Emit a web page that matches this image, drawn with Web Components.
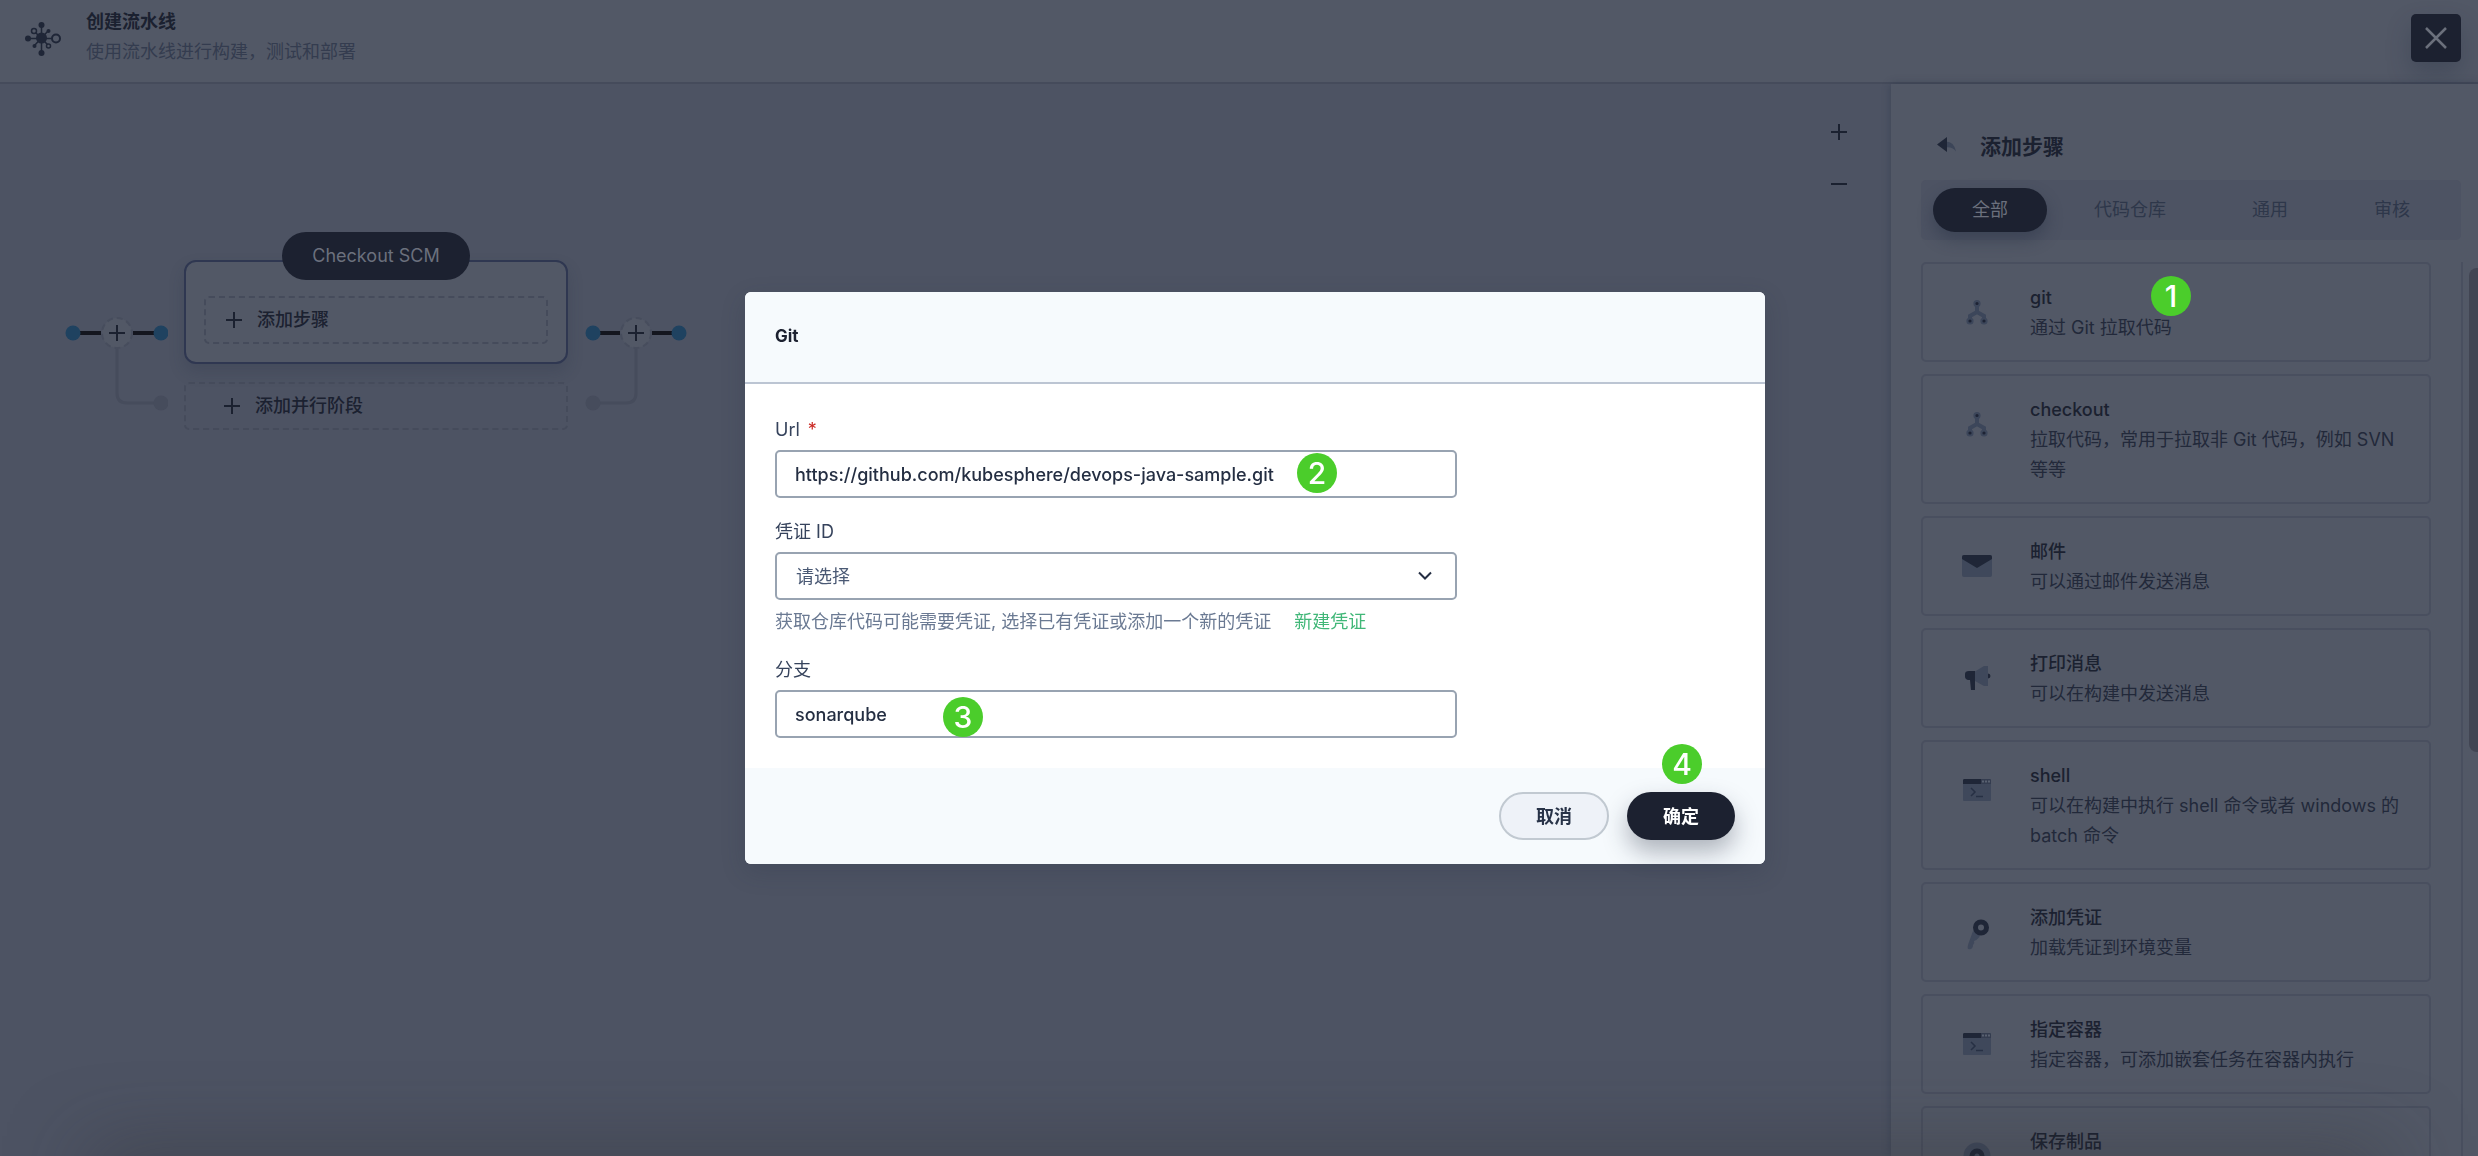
<!DOCTYPE html>
<html lang="zh-CN">
<head>
<meta charset="utf-8">
<title>创建流水线</title>
<style>
  html, body { margin: 0; height: 100%; }
  body {
    font-family: Inter, "Noto Sans CJK SC", sans-serif;
    font-size: 18px;
    line-height: 30px;
    overflow: hidden;
    --surface: #525866;
    --canvas: #4d5363;
    --line: #454b5b;
    --faint: #494f5f;
    --ink: #1b2130;
    --ink-soft: #22293a;
    --muted: #343c4f;
    --navy: #1c2130;
  }
</style>
</head>
<body>
<pipeline-app></pipeline-app>
<script>
const RESET = `
  *, *::before, *::after { box-sizing: border-box; }
  button, input, select { font: inherit; color: inherit; margin: 0; }
  button { border: 0; background: none; padding: 0; cursor: pointer; }
  h1, h2, h3, p, ul { margin: 0; padding: 0; font-size: inherit; }
  svg { display: block; }
`;

function define(name, css, html) {
  customElements.define(name, class extends HTMLElement {
    connectedCallback() {
      if (this.shadowRoot) return;
      const root = this.attachShadow({ mode: 'open' });
      const markup = typeof html === 'function' ? html(this) : html;
      root.innerHTML = `<style>${RESET}${css}</style>${markup}`;
    }
  });
}

const ICONS = {
  branch: `<svg width="40" height="40" viewBox="0 0 40 40"><path d="M20 11v9M13 29v-5l7-4 7 4v5" fill="none" stroke="#3c465a" stroke-width="4"/><g fill="#1d2334" stroke="#3c465a" stroke-width="2"><circle cx="20" cy="11.500" r="2.600"/><circle cx="13" cy="29" r="2.600"/><circle cx="27" cy="29" r="2.600"/></g></svg>`,
  mail: `<svg width="40" height="40" viewBox="0 0 40 40"><rect x="5" y="9" width="30" height="22" rx="2" fill="#3f485b"/><path d="M7 9h26a2 2 0 0 1 2 2v2L20 22 5 13v-2a2 2 0 0 1 2-2z" fill="#1f2637"/></svg>`,
  horn: `<svg width="40" height="40" viewBox="0 0 40 40"><path d="M18 13.500 27 8h4v20h-4l-9-5z" fill="#3f485b"/><path d="M31 15.500a2.500 2.500 0 0 1 0 5zM18 13v19h-4l-1-10h-2q-3-1-3-3.500V16q0-3 4-3z" fill="#1f2637"/></svg>`,
  shell: `<svg width="40" height="40" viewBox="0 0 40 40"><rect x="6" y="9" width="28" height="22" rx="1" fill="#3f485b"/><path d="M7 9h17v5H6v-4z" fill="#1f2637"/><path d="M24 9h9l1 1v4H24z" fill="#343c4f"/><path d="M25 11.500h2m1 0h2m1 0h2" stroke="#596171" stroke-width="2"/><path d="m14 18 4 4-4 4M19 26.500h7" fill="none" stroke="#273044" stroke-width="1.500"/></svg>`,
  key: `<svg width="40" height="40" viewBox="0 0 40 40"><path d="m16 19 7 4q-1 4-6 6 1 2-1 4 0 5-5 4-1-2 1-7z" fill="#3f485b"/><circle cx="24" cy="15.500" r="5.500" fill="none" stroke="#1f2637" stroke-width="5"/></svg>`,
  disc: `<svg width="40" height="40" viewBox="0 0 40 40"><circle cx="20" cy="20" r="13.500" fill="#3f485b"/><circle cx="20" cy="20" r="5" fill="none" stroke="#1f2637" stroke-width="5"/></svg>`,
  plus: `<svg width="16" height="16" viewBox="0 0 16 16"><path d="M8 0v16M0 8h16" stroke="currentColor" stroke-width="2"/></svg>`,
  minus: `<svg width="16" height="16" viewBox="0 0 16 16"><path d="M0 8h16" stroke="currentColor" stroke-width="2"/></svg>`
};

define('num-badge', `
  :host { display: flex; align-items: center; justify-content: center; width: 40px; height: 40px;
    border-radius: 50%; background: #4bcd2b; color: #fff; font: 500 30px/40px Inter, sans-serif; position: absolute; z-index: 2; pointer-events: none; }
`, `<slot></slot>`);

define('page-header', `
  :host { display: flex; align-items: flex-start; justify-content: space-between; height: 84px; flex: none;
    background: var(--surface); border-bottom: 2px solid var(--line); padding: 0 17px 0 24px; }
  .brand { display: flex; gap: 24px; }
  .brand svg { margin-top: 20px; }
  .text { display: flex; flex-direction: column; padding-top: 7px; }
  h1 { font-weight: 600; line-height: 30px; color: var(--ink); }
  p { color: var(--muted); }
  button { margin-top: 14px; width: 50px; height: 48px; border-radius: 5px; background: var(--navy); color: #6b707c;
    display: flex; align-items: center; justify-content: center; box-shadow: 0 12px 24px rgba(36,46,66,.3); }
`, `
  <div class="brand">
    <svg width="38" height="38" viewBox="0 0 38 38" fill="#1f2637" stroke="#1f2637">
      <path d="M17.500 4v28M4 18.500h24M10 11l15 15M24 11 10 26" stroke-width="1.500"/>
      <circle cx="17.500" cy="18" r="5.500" stroke="none"/>
      <g stroke="none"><circle cx="17.500" cy="5" r="3"/><circle cx="17.500" cy="33" r="3"/><circle cx="4" cy="18.500" r="3"/><circle cx="24.500" cy="11" r="2"/><circle cx="10.500" cy="26" r="2"/></g>
      <g fill="#525866"><circle cx="10" cy="11" r="2.500" stroke-width="1.500"/><circle cx="32" cy="18.500" r="4" stroke-width="2"/><circle cx="24.500" cy="26" r="2" stroke-width="1.500"/></g>
    </svg>
    <div class="text"><h1>创建流水线</h1><p>使用流水线进行构建，测试和部署</p></div>
  </div>
  <button aria-label="关闭"><svg width="22" height="22" viewBox="0 0 22 22"><path d="m1 1 20 20M21 1 1 21" stroke="currentColor" stroke-width="2.500"/></svg></button>
`);

define('flow-link', `:host { display: block; width: 104px; flex: none; }`, el => {
  const out = el.hasAttribute('out');
  const m = out ? 52 : 53, e = out ? 95 : 97, g = out ? 9 : 97;
  const bend = out ? `M${m} 40V84q0 10-10 10H9` : `M${m} 40V84q0 10 10 10H97`;
  return `<svg width="104" height="104" viewBox="0 0 104 104" fill="none">
    <path d="${bend}" stroke="#464c5c" stroke-width="3"/>
    <circle cx="${g}" cy="94" r="7.500" fill="#464c5c"/>
    <path d="M9 24H${m - 16}M${m + 16} 24H${e}" stroke="#14161f" stroke-width="4"/>
    <circle cx="9" cy="24" r="7.500" fill="#1f4260"/><circle cx="${e}" cy="24" r="7.500" fill="#1f4260"/>
    <circle cx="${m}" cy="24" r="15" fill="#525866" stroke="#474d5d" stroke-width="2" stroke-dasharray="6 4"/>
    <path d="M${m} 16v16M${m - 8} 24h16" stroke="#1b2130" stroke-width="2"/></svg>`;
});

define('dashed-button', `
  :host { display: block; }
  button { display: flex; align-items: center; gap: 15px; width: 100%; height: 48px; border: 2px dashed var(--line);
    border-radius: 5px; color: var(--ink); font-weight: 500; text-align: left; padding: 0 20px; }
  :host([wide]) button { padding: 0 38px; }
`, `<button>${ICONS.plus}<slot></slot></button>`);

define('pipeline-stage', `
  :host { display: flex; flex-direction: column; gap: 18px; width: 384px; flex: none; }
  .box { display: flex; flex-direction: column; align-items: stretch; background: var(--surface); border: 2px solid #2f3751;
    border-radius: 12px; padding: 0 18px 18px; height: 104px; box-shadow: 0 8px 16px rgba(36,46,66,.2); }
  .name { align-self: center; flex: none; height: 48px; border-radius: 24px; background: var(--navy); color: #6b707d; padding: 0 30px;
    line-height: 48px; margin: -30px 0 16px; }
`, `<div class="box"><div class="name"><slot name="title"></slot></div><slot></slot></div><slot name="parallel"></slot>`);

define('pipeline-canvas', `
  :host { display: block; flex: 1; min-width: 0; position: relative; background: var(--canvas); padding: 176px 0 0 64px; }
  .row { display: flex; align-items: flex-start; gap: 16px; }
  flow-link { margin-top: 49px; }
  .zoom { position: absolute; top: 32px; right: 36px; display: flex; flex-direction: column; gap: 20px; color: var(--ink); }
  .zoom button { width: 32px; height: 32px; display: flex; align-items: center; justify-content: center; }
`, `
  <div class="zoom"><button aria-label="放大">${ICONS.plus}</button><button aria-label="缩小">${ICONS.minus}</button></div>
  <div class="row">
    <flow-link></flow-link>
    <pipeline-stage>
      <span slot="title">Checkout SCM</span>
      <dashed-button>添加步骤</dashed-button>
      <dashed-button wide slot="parallel">添加并行阶段</dashed-button>
    </pipeline-stage>
    <flow-link out></flow-link>
  </div>
`);

define('step-card', `
  :host { display: block; position: relative; flex: none; }
  button { display: flex; align-items: flex-start; width: 100%; min-height: 100px; text-align: left; border: 2px solid var(--faint); border-radius: 5px;
    padding: 19px 18px 17px 34px; }
  .icon { flex: none; width: 73px; padding-top: 9px; }
  .body { flex: 1; min-width: 0; color: var(--ink-soft); }
  .body b { display: block; font-weight: 500; color: var(--ink); }
  .body span { display: block; }
`, el => {
  const desc = el.getAttribute('desc');
  return `<button><span class="icon">${ICONS[el.getAttribute('icon')]}</span>
  <span class="body"><b>${el.getAttribute('name')}</b>${desc ? `<span>${desc}</span>` : ''}</span></button><slot></slot>`;
});

define('tab-bar', `
  :host { display: flex; gap: 8px; height: 60px; flex: none; padding: 8px 12px; border-radius: 5px; background: var(--canvas); color: #2e374a; }
  button { height: 44px; border-radius: 22px; padding: 0 39px; white-space: nowrap; line-height: 44px; }
  button[aria-selected="true"] { background: var(--navy); color: #6b707d; box-shadow: 0 8px 16px rgba(36,46,66,.4); }
`, el => el.getAttribute('tabs').split(',').map((t, i) =>
  `<button role="tab" aria-selected="${i === 0}">${t}</button>`).join(''));

define('step-panel', `
  :host { display: flex; flex-direction: column; width: 587px; flex: none; background: var(--surface); min-height: 0;
    box-shadow: 0 0 8px rgba(36,46,66,.4); position: relative; }
  header { display: flex; align-items: center; gap: 23px; padding: 48px 0 18px 46px; color: var(--ink); }
  header svg { margin-bottom: 2px; }
  h2 { font-size: 21px; line-height: 30px; font-weight: 600; }
  tab-bar { margin: 0 17px 22px 30px; }
  .scroll { display: flex; flex: 1; min-height: 0; overflow: hidden; }
  .list { flex: 1; display: flex; flex-direction: column; gap: 12px; padding: 0 30px; min-height: 0; overflow: hidden; }
  .track { width: 17px; border-left: 2px solid var(--faint); padding: 6px 0 0 6px; }
  .thumb { height: 484px; border-radius: 8px 0 0 8px; background: #414553; }
  num-badge { left: 230px; top: 14px; }
`, `
  <header><button aria-label="返回"><svg width="20" height="20" viewBox="0 0 20 20"><path d="M9 5.500q8 0 10 10-4-5-10-4z" fill="#3c4558"/><path d="M0 8.500 10 1v15z" fill="#1f2637"/></svg></button><h2>添加步骤</h2></header>
  <tab-bar tabs="全部,代码仓库,通用,审核"></tab-bar>
  <div class="scroll">
    <div class="list">
      <step-card icon="branch" name="git" desc="通过 Git 拉取代码"><num-badge>1</num-badge></step-card>
      <step-card icon="branch" name="checkout" desc="拉取代码，常用于拉取非 Git 代码，例如 SVN 等等"></step-card>
      <step-card icon="mail" name="邮件" desc="可以通过邮件发送消息"></step-card>
      <step-card icon="horn" name="打印消息" desc="可以在构建中发送消息"></step-card>
      <step-card icon="shell" name="shell" desc="可以在构建中执行 shell 命令或者 windows 的 batch 命令"></step-card>
      <step-card icon="key" name="添加凭证" desc="加载凭证到环境变量"></step-card>
      <step-card icon="shell" name="指定容器" desc="指定容器，可添加嵌套任务在容器内执行"></step-card>
      <step-card icon="disc" name="保存制品"></step-card>
    </div>
    <div class="track"><div class="thumb"></div></div>
  </div>
`);

define('form-field', `
  :host { display: block; width: 682px; max-width: 100%; }
  label { display: block; padding-top: 1px; margin-bottom: 5px; color: #36435c; }
  label i { font-style: normal; color: #ca2621; margin-left: 8px; }
  .box { position: relative; }
  input, select { display: block; width: 100%; height: 48px; border: 2px solid #98a3b1; border-radius: 5px; background: #fff; padding: 1px 18px 0;
    outline: 0; appearance: none; color: #242e42; font-weight: 500; }
  select { color: #4a5974; font-weight: 400; padding: 1px 19px 0; }
  .box svg { position: absolute; right: 25px; top: 19px; pointer-events: none; }
`, el => {
  const req = el.hasAttribute('required') ? '<i>*</i>' : '';
  const control = el.hasAttribute('select')
    ? `<select id="c"><option>${el.getAttribute('value')}</option></select><svg width="14" height="10" viewBox="0 0 14 10"><path d="m1 1.500 6 6 6-6" fill="none" stroke="#242e42" stroke-width="2"/></svg>`
    : `<input id="c" type="text" value="${el.getAttribute('value')}">`;
  return `<label for="c">${el.getAttribute('label')}${req}</label><div class="box">${control}<slot></slot></div><slot name="hint"></slot>`;
});

define('git-dialog', `
  :host { position: fixed; inset: 0; display: flex; align-items: center; justify-content: center; padding-left: 32px; z-index: 5; }
  section { width: 1020px; background: #fff; border-radius: 6px; box-shadow: 0 8px 24px rgba(36,46,66,.2); }
  header { height: 92px; background: #f6fafd; border-bottom: 2px solid #bcc5d3; border-radius: 6px 6px 0 0; padding: 28px 30px; }
  h2 { font-size: 17px; line-height: 32px; font-weight: 700; color: #1c2130; }
  form { display: flex; flex-direction: column; gap: 18px; padding: 30px; }
  footer { display: flex; justify-content: flex-end; gap: 18px; padding: 24px 30px; background: #f6fafd; border-radius: 0 0 6px 6px; }
  .hint { padding-top: 7px; height: 36px; color: #6b7a93; white-space: nowrap; }
  .hint a { color: #41b778; text-decoration: none; margin-left: 23px; }
  footer button { height: 48px; border-radius: 24px; padding: 2px 36px 0; font-weight: 600; }
  .cancel { border: 2px solid #c1c9d1; background: #eef2f8; color: #283348; padding: 2px 35px 0; }
  .ok { position: relative; background: #1c2130; color: #fff; box-shadow: 0 12px 24px rgba(36,46,66,.35); }
  .url { left: 522px; top: 3px; }
  .branch { left: 168px; top: 7px; }
  .submit { left: 35px; top: -48px; }
`, `
  <section role="dialog" aria-label="Git">
    <header><h2>Git</h2></header>
    <form>
      <form-field label="Url" required value="https://github.com/kubesphere/devops-java-sample.git"><num-badge class="url">2</num-badge></form-field>
      <form-field label="凭证 ID" select value="请选择"><p class="hint" slot="hint">获取仓库代码可能需要凭证, 选择已有凭证或添加一个新的凭证<a href="#">新建凭证</a></p></form-field>
      <form-field label="分支" value="sonarqube"><num-badge class="branch">3</num-badge></form-field>
    </form>
    <footer><button class="cancel">取消</button><button class="ok">确定<num-badge class="submit">4</num-badge></button></footer>
  </section>
`);

define('pipeline-app', `
  :host { display: flex; flex-direction: column; height: 100vh; overflow: hidden; }
  main { display: flex; flex: 1; min-height: 0; }
  .shade { position: fixed; left: 90px; right: 90px; bottom: -40px; height: 40px; pointer-events: none; z-index: 4;
    box-shadow: 0 0 80px rgba(48,48,52,.6); }
`, `<page-header></page-header><main><pipeline-canvas></pipeline-canvas><step-panel></step-panel></main><div class="shade"></div><git-dialog></git-dialog>`);
</script>
</body>
</html>
